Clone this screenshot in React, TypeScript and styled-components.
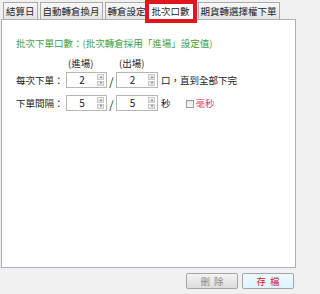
import styled, { createGlobalStyle } from 'styled-components'

const GlobalStyle = createGlobalStyle`
  html, body {
    margin: 0;
    padding: 0;
    background: #f0f0f0;
  }
  body {
    font-family: "Noto Sans CJK TC", "Noto Sans", "Liberation Sans", sans-serif;
    font-size: 9.5px;
    color: #222222;
  }
`;

const Window = styled.div`
  width: 300px;
  height: 294px;
  background: #f0f0f0;
  display: flex;
  flex-direction: column;
  overflow: hidden;
`;

const TabRow = styled.div`
  display: flex;
  align-items: flex-end;
  gap: 2px;
  height: 19px;
  padding-left: 3px;
  position: relative;
  z-index: 2;
  white-space: nowrap;
`;

const Tab = styled.div<{ $selected?: boolean }>`
  box-sizing: border-box;
  height: ${p => (p.$selected ? '23px' : '17px')};
  padding: ${p => (p.$selected ? '0 3px' : '0 2px')};
  border: ${p => (p.$selected ? '4px solid #e3151e' : '1px solid #a9a9a9')};
  border-bottom: ${p => (p.$selected ? '4px solid #e3151e' : 'none')};
  margin: ${p => (p.$selected ? '0 -1px -4px -6px' : '0')};
  background: ${p => (p.$selected ? '#ffffff' : 'linear-gradient(#f7f7f7, #e4e4e4)')};
  line-height: ${p => (p.$selected ? '14px' : '16px')};
  color: #1e1e1e;
  position: relative;
  z-index: ${p => (p.$selected ? 3 : 1)};
`;

const Panel = styled.div`
  box-sizing: border-box;
  height: 249px;
  margin: 0 4px 0 1px;
  background: #ffffff;
  border: 1px solid #a7b0bb;
  padding: 17px 0 0 14px;
`;

const Title = styled.div`
  color: #3f9e3f;
  line-height: 12px;
  margin-bottom: 8px;
`;

const Form = styled.div<{ $rows: string; $top?: number }>`
  display: grid;
  grid-template-columns: 50px 41px 9px 42px auto;
  grid-template-rows: ${p => p.$rows};
  row-gap: 3px;
  align-items: center;
  margin-top: ${p => p.$top ?? 0}px;
`;

const HeaderCell = styled.div<{ $pad: number }>`
  padding-left: ${p => p.$pad}px;
  line-height: 12px;
`;

const Label = styled.div`
  line-height: 16px;
`;

const SpinBox = styled.div`
  box-sizing: border-box;
  height: 16px;
  border: 1px solid #b3b6bb;
  background: #ffffff;
  display: flex;
  align-items: stretch;
  padding: 1px 2px 1px 0;
`;

const SpinValue = styled.div`
  flex: 1;
  text-align: center;
  line-height: 12px;
  font-size: 10px;
`;

const SpinButtons = styled.div`
  width: 7px;
  display: flex;
  flex-direction: column;
  gap: 1px;
`;

const SpinButton = styled.div<{ $down?: boolean }>`
  flex: 1;
  background: linear-gradient(#f3f3f3, #dedede);
  border: 1px solid #c9c9c9;
  box-sizing: border-box;
  display: flex;
  align-items: center;
  justify-content: center;
  &::after {
    content: '';
    border-left: 1.5px solid transparent;
    border-right: 1.5px solid transparent;
    ${p => (p.$down ? 'border-top: 2px solid #6a6a6a;' : 'border-bottom: 2px solid #6a6a6a;')}
  }
`;

const Slash = styled.div`
  text-align: center;
  font-size: 11px;
  line-height: 16px;
  padding-top: 2px;
`;

const Tail = styled.div`
  display: flex;
  align-items: center;
  padding-left: 3px;
  line-height: 16px;
`;

const Check = styled.span`
  box-sizing: border-box;
  width: 8px;
  height: 8px;
  border: 1px solid #9a9a9a;
  background: linear-gradient(#e8e8e8, #f8f8f8);
  margin: 1px 2px 0 15px;
`;

const Red = styled.span`
  color: #e0405c;
`;

const Footer = styled.div`
  display: flex;
  justify-content: flex-end;
  gap: 4px;
  padding: 5px 6px 0 0;
`;

const Button = styled.button<{ $primary?: boolean }>`
  box-sizing: border-box;
  width: 52px;
  height: 16px;
  padding: 0 0 0 4px;
  border: 1px solid #a6a6a6;
  border-radius: 2px;
  font-family: inherit;
  font-size: 9.5px;
  letter-spacing: 4px;
  line-height: 14px;
  color: ${p => (p.$primary ? '#d41c2c' : '#8a8a8a')};
  background: ${p => (p.$primary ? 'linear-gradient(#eefbfe, #def4fb)' : 'linear-gradient(#f3f3f3, #dcdcdc)')};
`;

function Spinner({ value }: { value: string }) {
  return (
    <SpinBox>
      <SpinValue>{value}</SpinValue>
      <SpinButtons>
        <SpinButton />
        <SpinButton $down />
      </SpinButtons>
    </SpinBox>
  )
}

const tabs = ['結算日', '自動轉倉換月', '轉倉設定', '批次口數', '期貨轉選擇權下單'];

export default function App() {
  return (
    <Window>
      <GlobalStyle />
      <TabRow>
        {tabs.map(t => (
          <Tab key={t} $selected={t === '批次口數'}>{t}</Tab>
        ))}
      </TabRow>
      <Panel>
        <Title>批次下單口數：(批次轉倉採用「進場」設定值)</Title>
        <Form $rows="12px 16px">
          <div />
          <HeaderCell $pad={2}>(進場)</HeaderCell>
          <div />
          <HeaderCell $pad={3}>(出場)</HeaderCell>
          <div />

          <Label>每次下單：</Label>
          <Spinner value="2" />
          <Slash>/</Slash>
          <Spinner value="2" />
          <Tail>口，直到全部下完</Tail>
        </Form>
        <Form $rows="16px" $top={7}>
          <Label>下單間隔：</Label>
          <Spinner value="5" />
          <Slash>/</Slash>
          <Spinner value="5" />
          <Tail>秒<Check /><Red>毫秒</Red></Tail>
        </Form>
      </Panel>
      <Footer>
        <Button>刪除</Button>
        <Button $primary>存檔</Button>
      </Footer>
    </Window>
  )
}
